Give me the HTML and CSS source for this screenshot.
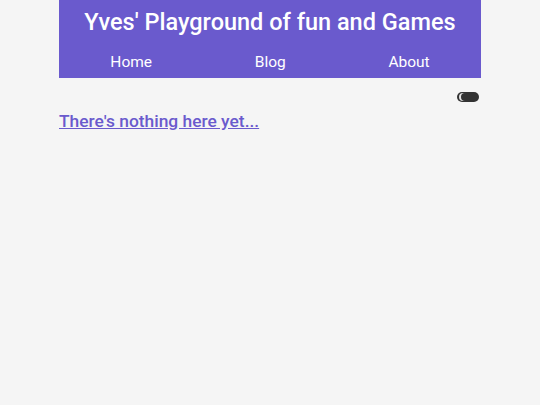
FILE: index.html
```html
<!DOCTYPE html>
<html>
<head>
<meta charset="utf-8">
<link rel="stylesheet" href="styles.css">
</head>
<body>
<div class="wrap">
  <header class="header">
    <h1 class="title">Yves' Playground of fun and Games</h1>
    <nav class="nav">
      <a class="nav-item" href="#">Home</a>
      <a class="nav-item" href="#">Blog</a>
      <a class="nav-item" href="#">About</a>
    </nav>
  </header>
  <div class="toolbar">
    <span class="toggle"><span class="moon"></span></span>
  </div>
  <a class="empty" href="#">There's nothing here yet...</a>
</div>
</body>
</html>
```

FILE: styles.css
```css
html, body {
  margin: 0;
  padding: 0;
  background: #f5f5f5;
  font-family: Roboto, "Liberation Sans", sans-serif;
}
.wrap {
  width: 422px;
  margin: 0 auto;
}
.header {
  background: #6a5acd;
  color: #fff;
  height: 78px;
  display: flex;
  flex-direction: column;
}
.title {
  margin: 0;
  padding-top: 7px;
  font-size: 23.5px;
  font-weight: 500;
  line-height: 30px;
  text-align: center;
}
.nav {
  display: flex;
  justify-content: space-around;
  margin-top: 16px;
}
.nav-item {
  color: #fff;
  text-decoration: none;
  font-size: 15.5px;
  line-height: 18px;
}
.toolbar {
  display: flex;
  justify-content: flex-end;
  padding: 14px 2px 0 0;
  height: 10px;
}
.toggle {
  position: relative;
  width: 22px;
  height: 10px;
  border-radius: 5px;
  background: #333;
  display: block;
}
.moon {
  position: absolute;
  left: 2px;
  top: 1px;
  width: 8px;
  height: 8px;
  border-radius: 50%;
  box-shadow: inset 2px 0 0 0 #e2e2e2;
}
.empty {
  display: inline-block;
  margin-top: 8px;
  color: #6a5acd;
  font-size: 17.4px;
  font-weight: 500;
  line-height: 22px;
  text-decoration: underline;
}
```
